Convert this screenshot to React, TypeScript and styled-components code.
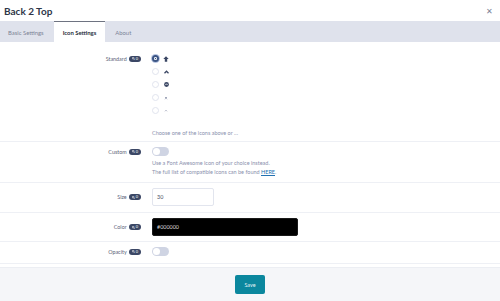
import React from 'react';
import styled, { createGlobalStyle } from 'styled-components';

const GlobalStyle = createGlobalStyle`
	html, body {
		margin: 0;
		padding: 0;
		background: #ffffff;
		font-family: Lato, 'Open Sans', sans-serif;
	}
`;

const Page = styled.div`
	width: 500px;
	height: 301px;
	display: flex;
	flex-direction: column;
	overflow: hidden;
	background: #ffffff;
`;

const Header = styled.div`
	height: 21px;
	display: flex;
	align-items: center;
	justify-content: space-between;
	padding: 0 7px 0 4px;
`;

const Title = styled.h1`
	margin: 0;
	font-size: 10px;
	font-weight: 700;
	color: #2e3648;
`;

const Close = styled.span`
	font-size: 8px;
	color: #7a8194;
	line-height: 1;
`;

const TabBar = styled.div`
	height: 21px;
	display: flex;
	background: #dfe2ec;
`;

const Tab = styled.div<{ $active?: boolean }>`
	display: flex;
	align-items: center;
	box-sizing: border-box;
	padding: 0 ${(p) => (p.$active ? '9px' : '8px')};
	font-size: 5.9px;
	font-weight: ${(p) => (p.$active ? 700 : 400)};
	color: ${(p) => (p.$active ? '#2a3040' : '#7c8396')};
	background: ${(p) => (p.$active ? '#ffffff' : 'transparent')};
	border-top: ${(p) => (p.$active ? '1px solid #6e7381' : '1px solid transparent')};
	margin: ${(p) => (p.$active ? '0 2px 0 2px' : '0')};
`;

const Content = styled.div`
	display: flex;
	flex-direction: column;
`;

const Row = styled.div<{ $pad: number; $h: number }>`
	display: grid;
	grid-template-columns: 141px 1fr;
	column-gap: 11px;
	height: ${(p) => p.$h}px;
	box-sizing: border-box;
	padding-top: ${(p) => p.$pad}px;
	border-bottom: 1px solid #eef0f5;
`;

const LabelCell = styled.div<{ $offset?: number }>`
	display: flex;
	justify-content: flex-end;
	align-items: center;
	gap: 2px;
	height: ${(p) => p.$offset ?? 10}px;
	font-size: 5.4px;
	color: #5d6479;
`;

const Badge = styled.span`
	display: inline-flex;
	align-items: center;
	gap: 1px;
	height: 6px;
	padding: 0 3px;
	border-radius: 3px;
	background: #3b4765;
	color: #ffffff;
	font-size: 4px;
	line-height: 1;
`;

const Control = styled.div`
	display: flex;
	flex-direction: column;
`;

const RadioList = styled.div`
	display: flex;
	flex-direction: column;
	gap: 6px;
`;

const RadioItem = styled.div`
	display: flex;
	align-items: center;
	gap: 4px;
	height: 7px;
`;

const Radio = styled.span<{ $checked?: boolean }>`
	width: 7px;
	height: 7px;
	box-sizing: border-box;
	border-radius: 50%;
	border: ${(p) => (p.$checked ? '2px solid #3c5685' : '1px solid #e1e4ee')};
	background: #ffffff;
	box-shadow: ${(p) => (p.$checked ? '0 0 0 1px #b9c6e2' : 'none')};
	position: relative;

	&::after {
		content: '';
		display: ${(p) => (p.$checked ? 'block' : 'none')};
		position: absolute;
		inset: 0;
		border-radius: 50%;
		background: #3c5685;
		border: 1px solid #ffffff;
	}
`;

const IconSlot = styled.span`
	display: inline-flex;
	width: 6px;
	justify-content: center;
	color: #3a4663;
`;

const Help = styled.div<{ $top?: number }>`
	font-size: 5.5px;
	line-height: 9px;
	color: #8a90ad;
	margin-top: ${(p) => p.$top ?? 0}px;
`;

const Link = styled.a`
	color: #2271b1;
	text-decoration: underline;
`;

const Toggle = styled.span`
	display: inline-flex;
	align-items: center;
	width: 17px;
	height: 9px;
	box-sizing: border-box;
	padding: 0 1px;
	border-radius: 5px;
	background: #cfd4e3;

	&::before {
		content: '';
		width: 7px;
		height: 7px;
		border-radius: 50%;
		background: #ffffff;
	}
`;

const Input = styled.div<{ $w: number; $dark?: boolean }>`
	width: ${(p) => p.$w}px;
	height: 18px;
	box-sizing: border-box;
	display: flex;
	align-items: center;
	padding-left: 4px;
	border: 1px solid ${(p) => (p.$dark ? '#1a1a1a' : '#e2e5ee')};
	border-radius: 2px;
	background: ${(p) => (p.$dark ? '#000000' : '#ffffff')};
	color: ${(p) => (p.$dark ? '#d8d8d8' : '#4a5064')};
	font-size: 5.4px;
`;

const Spacer = styled.div`
	flex: 1;
`;

const Footer = styled.div`
	height: 33px;
	display: flex;
	align-items: center;
	justify-content: center;
	background: #f5f6f9;
	border-top: 1px solid #eceef3;
`;

const SaveButton = styled.button`
	width: 30px;
	height: 19px;
	border: 0;
	border-radius: 2px;
	background: #0b879e;
	color: #e6f4f7;
	font-family: inherit;
	font-size: 5.4px;
	padding: 0;
`;

const SearchIcon = () => (
	<svg width="3" height="3" viewBox="0 0 10 10">
		<circle cx="4" cy="4" r="3" fill="none" stroke="#fff" strokeWidth="2" />
		<line x1="6" y1="6" x2="9" y2="9" stroke="#fff" strokeWidth="2" />
	</svg>
);

const CountBadge = () => (
	<Badge>
		<SearchIcon />0
	</Badge>
);

const ArrowUp = () => (
	<svg width="6" height="6" viewBox="0 0 10 10">
		<path d="M5 0.5 L9.5 5 L7 5 L7 9.5 L3 9.5 L3 5 L0.5 5 Z" fill="currentColor" />
	</svg>
);

const ChevronUp = () => (
	<svg width="5" height="4" viewBox="0 0 10 8">
		<path d="M1 6.5 L5 2.5 L9 6.5" fill="none" stroke="currentColor" strokeWidth="2.6" />
	</svg>
);

const CircleUp = () => (
	<svg width="5" height="5" viewBox="0 0 10 10">
		<circle cx="5" cy="5" r="4.8" fill="currentColor" />
		<path d="M2.8 6 L5 3.6 L7.2 6" fill="none" stroke="#fff" strokeWidth="1.5" />
	</svg>
);

const AngleDouble = () => (
	<svg width="4" height="4" viewBox="0 0 10 10">
		<path d="M2.5 5 L5 2.5 L7.5 5 M2.5 8 L5 5.5 L7.5 8" fill="none" stroke="#6b7493" strokeWidth="1.6" />
	</svg>
);

const AngleUp = () => (
	<svg width="4" height="3" viewBox="0 0 10 8">
		<path d="M2.5 6 L5 3.5 L7.5 6" fill="none" stroke="#6b7493" strokeWidth="1.6" />
	</svg>
);

const icons = [ArrowUp, ChevronUp, CircleUp, AngleDouble, AngleUp];

export default function App() {
	return (
		<Page>
			<GlobalStyle />
			<Header>
				<Title>Back 2 Top</Title>
				<Close>✕</Close>
			</Header>
			<TabBar>
				<Tab>Basic Settings</Tab>
				<Tab $active>Icon Settings</Tab>
				<Tab>About</Tab>
			</TabBar>
			<Content>
				<Row $pad={13} $h={100}>
					<LabelCell $offset={7}>
						Standard <CountBadge />
					</LabelCell>
					<Control>
						<RadioList>
							{icons.map((Icon, i) => (
								<RadioItem key={i}>
									<Radio $checked={i === 0} />
									<IconSlot>
										<Icon />
									</IconSlot>
								</RadioItem>
							))}
						</RadioList>
						<Help $top={15}>Choose one of the icons above or ...</Help>
					</Control>
				</Row>
				<Row $pad={5} $h={41}>
					<LabelCell $offset={9}>
						Custom <CountBadge />
					</LabelCell>
					<Control>
						<Toggle />
						<Help $top={3}>
							Use a Font Awesome icon of your choice instead.
							<br />
							The full list of compatible icons can be found <Link href="#">HERE</Link>.
						</Help>
					</Control>
				</Row>
				<Row $pad={5} $h={30}>
					<LabelCell $offset={18}>
						Size <CountBadge />
					</LabelCell>
					<Control>
						<Input $w={62}>30</Input>
					</Control>
				</Row>
				<Row $pad={5} $h={29}>
					<LabelCell $offset={18}>
						Color <CountBadge />
					</LabelCell>
					<Control>
						<Input $w={146} $dark>
							#000000
						</Input>
					</Control>
				</Row>
				<Row $pad={5} $h={22}>
					<LabelCell $offset={9}>
						Opacity <CountBadge />
					</LabelCell>
					<Control>
						<Toggle />
					</Control>
				</Row>
			</Content>
			<Spacer />
			<Footer>
				<SaveButton>Save</SaveButton>
			</Footer>
		</Page>
	);
}
